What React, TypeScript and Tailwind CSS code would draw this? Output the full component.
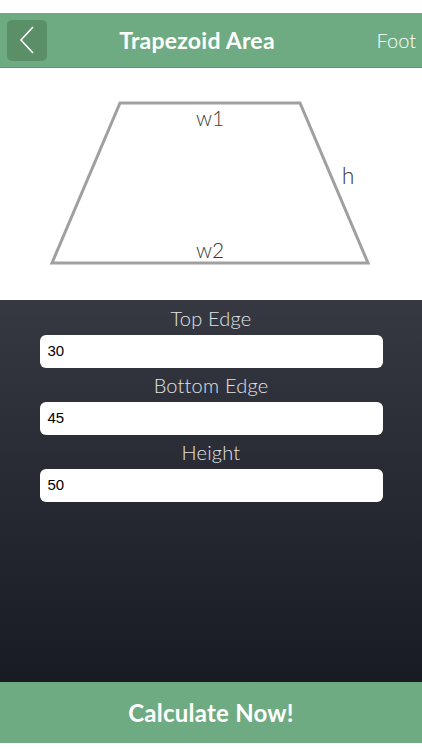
import React from 'react';

const font = { fontFamily: 'Lato, "Open Sans", sans-serif' };

function Field({ label, value }: { label: string; value: string }) {
  return (
    <div className="flex flex-col items-center">
      <div className="h-[34px] flex items-center text-[20px] font-light text-[#e2e3e5] leading-none tracking-[0.01em]">{label}</div>
      <div className="w-[343px] h-[33px] bg-white rounded-[6px] flex items-center px-[8px] text-[15px] text-black" style={{ fontFamily: '"Liberation Sans", Arial, sans-serif' }}>
        {value}
      </div>
    </div>
  );
}

export default function App() {
  return (
    <div className="w-[422px] h-[750px] bg-white flex flex-col" style={font}>
      <div className="h-[13px]" />
      {/* Header */}
      <div className="h-[55px] bg-[#6fab82] border-b border-[#5f9670] flex items-center px-[7px] relative">
        <div className="w-[40px] h-[41px] rounded-[5px] bg-[#5a8f68] flex items-center justify-center">
          <svg width="16" height="28" viewBox="0 0 16 28">
            <path d="M14 1 L2 14 L14 27" stroke="white" strokeWidth="1.6" fill="none" />
          </svg>
        </div>
        <div className="absolute left-0 right-0 pr-[28px] text-center text-white font-bold text-[23px] tracking-[0.01em] pointer-events-none">Trapezoid Area</div>
        <div className="ml-auto text-white font-light text-[20px] mr-[-1px]">Foot</div>
      </div>
      {/* Diagram */}
      <div className="h-[232px] bg-white">
        <svg width="422" height="232" viewBox="0 68 422 232">
          <polygon points="120,103 300,103 368,263 52,263" fill="none" stroke="#a0a0a0" strokeWidth="3" strokeLinejoin="miter" />
          <text x="210" y="126" textAnchor="middle" fontSize="21" fontWeight="300" fill="#3a3a3a" style={font}>w1</text>
          <text x="348" y="184" textAnchor="middle" fontSize="23" fontWeight="300" fill="#3a3a3a" style={font}>h</text>
          <text x="210" y="258" textAnchor="middle" fontSize="21" fontWeight="300" fill="#3a3a3a" style={font}>w2</text>
        </svg>
      </div>
      {/* Inputs */}
      <div className="h-[382px] bg-gradient-to-b from-[#363942] to-[#181b22] flex flex-col pt-[1px]">
        <Field label="Top Edge" value="30" />
        <Field label="Bottom Edge" value="45" />
        <Field label="Height" value="50" />
      </div>
      {/* Button */}
      <div className="h-[61px] bg-[#6fab82] flex items-center justify-center text-white font-bold text-[24px] tracking-[0.01em]">
        Calculate Now!
      </div>
      <div className="flex-1 bg-white" />
    </div>
  );
}
